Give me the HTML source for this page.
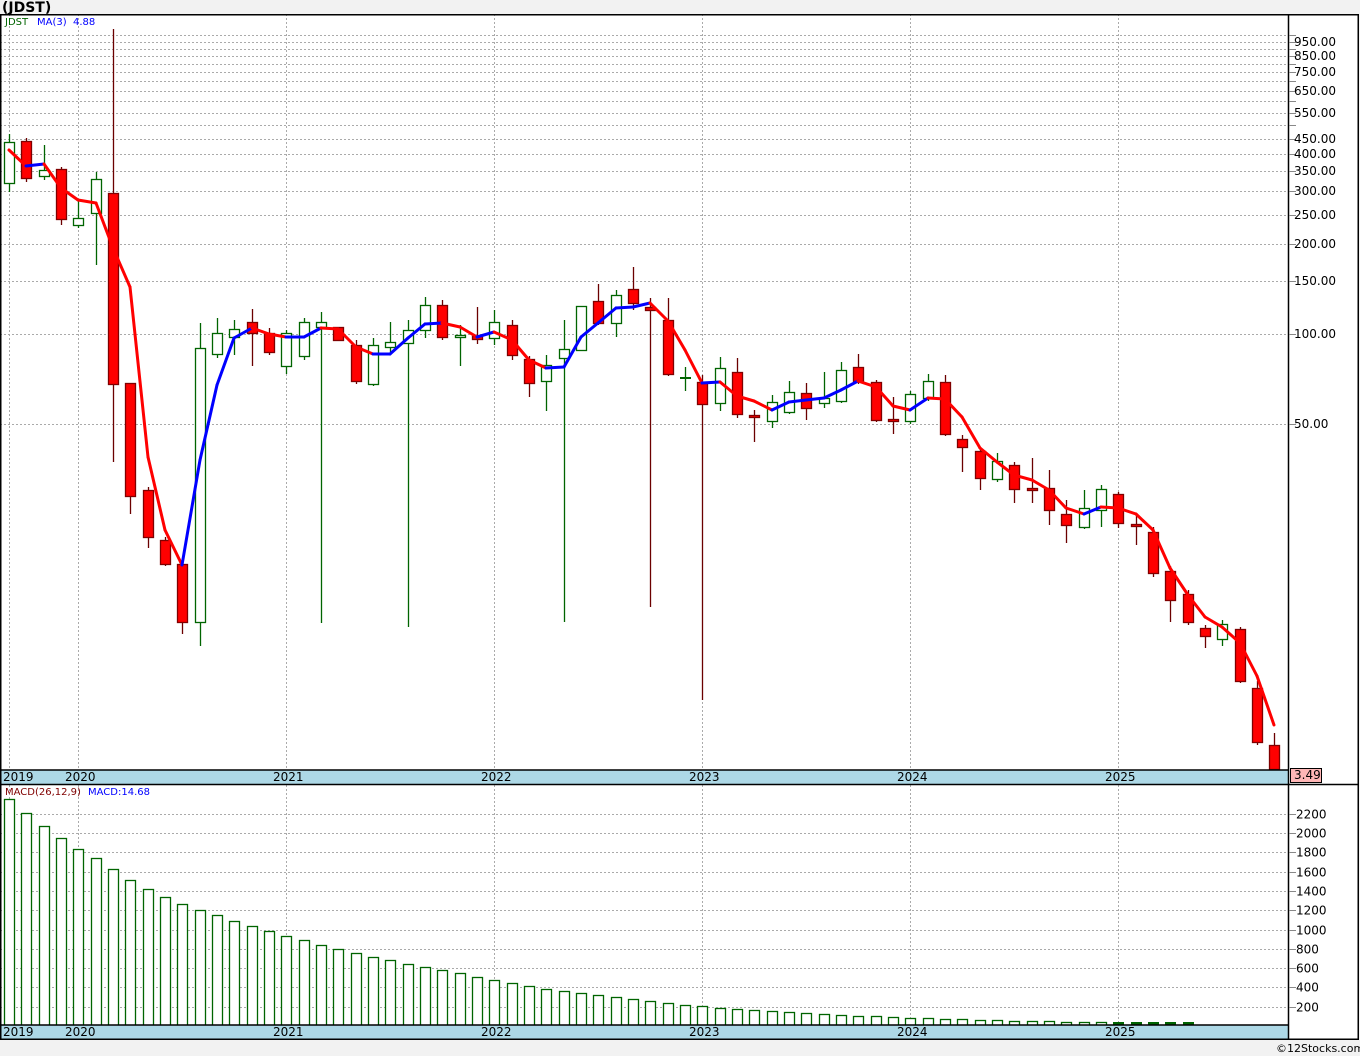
<!DOCTYPE html>
<html><head><meta charset="utf-8"><style>
body{margin:0;background:#f2f2f2;width:1360px;height:1056px;overflow:hidden;font-family:"Liberation Sans",sans-serif}
svg{position:absolute;left:0;top:0}
text{font-family:"DejaVu Sans","Liberation Sans",sans-serif;font-size:11px}
</style></head><body>
<svg id="s" width="1360" height="1056" xmlns="http://www.w3.org/2000/svg">
<rect x="0" y="14" width="1358" height="1026" fill="#fff"/>
<g id="grid"></g>
<g id="macd"></g>
<g id="candles"></g>
<g id="ma"></g>
<rect x="0" y="770" width="1289" height="14" fill="#add8e6"/>
<rect x="0" y="1025" width="1289" height="14" fill="#add8e6"/>
<g fill="none" stroke="#000" stroke-width="1.5">
<rect x="0.75" y="14.75" width="1357.5" height="1024.5"/>
<line x1="1288.5" y1="14" x2="1288.5" y2="1040"/>
<line x1="0" y1="770" x2="1289" y2="770"/>
<line x1="0" y1="784.5" x2="1358" y2="784.5"/>
<line x1="0" y1="1025" x2="1289" y2="1025"/>
</g>
<g fill="#000" style="font-size:12px">
<text x="3" y="781" style="font-size:12px">2019</text><text x="65" y="781" style="font-size:12px">2020</text><text x="273" y="781" style="font-size:12px">2021</text><text x="481" y="781" style="font-size:12px">2022</text><text x="689" y="781" style="font-size:12px">2023</text><text x="897" y="781" style="font-size:12px">2024</text><text x="1105" y="781" style="font-size:12px">2025</text>
<text x="3" y="1036" style="font-size:12px">2019</text><text x="65" y="1036" style="font-size:12px">2020</text><text x="273" y="1036" style="font-size:12px">2021</text><text x="481" y="1036" style="font-size:12px">2022</text><text x="689" y="1036" style="font-size:12px">2023</text><text x="897" y="1036" style="font-size:12px">2024</text><text x="1105" y="1036" style="font-size:12px">2025</text>
</g>
<text x="2" y="12" style="font-size:14px;font-weight:bold">(JDST)</text>
<text x="5" y="25" fill="#006400" style="font-size:10px">JDST</text>
<text x="37" y="25" fill="#0000ff" style="font-size:10px">MA(3)</text>
<text x="73" y="25" fill="#0000ff" style="font-size:10px">4.88</text>
<text x="5" y="795" fill="#800000" style="font-size:10px">MACD(26,12,9)</text>
<text x="88" y="795" fill="#0000ff" style="font-size:10px">MACD:14.68</text>
<rect x="1290.5" y="768.5" width="31" height="14" fill="#ffb6b6" stroke="#000"/>
<text x="1294" y="779" fill="#000" style="font-size:12px">3.49</text>
<g id="ax" fill="#000"></g>
<text x="1276" y="1052" fill="#000" style="font-size:11px">©12Stocks.com</text>
</svg>
<script>
var NS="http://www.w3.org/2000/svg";
function el(p,t,a){var e=document.createElementNS(NS,t);for(var k in a)e.setAttribute(k,a[k]);document.getElementById(p).appendChild(e);return e;}
function Y(p){return 334-299*Math.log10(p/100);}
var g=[];for(var p=1000;p>=100;p-=50)g.push(p);g.push(50);
g.forEach(function(p){var y=Math.round(Y(p))+.5;el("grid","line",{x1:0,y1:y,x2:1289,y2:y,stroke:"#aaa","stroke-dasharray":"2,2"});el("ax","line",{x1:1289,y1:y,x2:1296,y2:y,stroke:"#888"});});
[950,850,750,650,550,450,400,350,300,250,200,150,100,50].forEach(function(p){var t=el("ax","text",{x:1294,y:Math.round(Y(p))+4,style:"font-size:12px"});t.textContent=p.toFixed(2);});
for(var v=200;v<=2200;v+=200){var y=Math.round(1026-v*0.0965)+.5;el("grid","line",{x1:0,y1:y,x2:1289,y2:y,stroke:"#aaa","stroke-dasharray":"2,2"});el("ax","line",{x1:1289,y1:y,x2:1296,y2:y,stroke:"#888"});var t=el("ax","text",{x:1296,y:y+4,style:"font-size:12px"});t.textContent=v;}
[9,78,286,494,702,910,1118].forEach(function(x){el("grid","line",{x1:x+.5,y1:14,x2:x+.5,y2:770,stroke:"#aaa","stroke-dasharray":"2,2"});el("grid","line",{x1:x+.5,y1:785,x2:x+.5,y2:1025,stroke:"#aaa","stroke-dasharray":"2,2"});});
var C=[[142,183,134,192,0],[141,178,138,182,1],[170,176,145,180,0],[169,219,167,225,1],[218,225,200,228,0],[179,213,172,265,0],[193,384,29,462,1],[383,496,383,514,1],[490,537,487,548,1],[540,564,537,566,1],[564,622,562,634,1],[348,622,323,646,0],[333,354,318,358,0],[329,337,320,355,0],[322,333,309,366,1],[333,352,328,355,1],[333,366,330,374,0],[322,356,318,360,0],[322,327,312,623,0],[327,340,327,340,1],[345,381,340,384,1],[345,384,338,386,0],[342,347,322,352,0],[330,343,320,627,0],[305,330,297,338,0],[305,337,300,340,1],[335,337,325,366,0],[336,339,307,344,1],[322,338,310,345,0],[325,355,320,360,1],[359,383,356,397,1],[365,381,355,411,0],[349,358,320,622,0],[306,350,306,350,0],[301,323,284,325,1],[295,323,290,337,0],[289,303,267,310,1],[307,310,298,607,1],[320,374,298,376,1],[377,379,367,391,2],[382,404,375,700,1],[368,403,357,411,0],[372,414,358,418,1],[415,417,410,442,1],[402,421,395,428,0],[392,412,381,414,0],[393,408,383,420,1],[398,403,372,408,0],[370,401,362,403,0],[367,381,354,384,1],[382,420,380,422,1],[419,421,397,434,1],[394,421,391,424,0],[381,398,374,401,0],[382,434,375,436,1],[439,447,435,472,1],[451,478,448,490,1],[461,479,453,482,0],[465,489,462,503,1],[488,490,458,503,1],[488,510,470,525,1],[514,525,500,543,1],[508,527,490,529,0],[489,510,485,527,0],[494,523,492,528,1],[524,526,513,545,1],[532,573,527,577,1],[571,600,566,622,1],[594,622,590,625,1],[628,636,625,648,1],[624,639,620,646,0],[629,681,627,683,1],[688,742,681,745,1],[745,769,733,770,1]];
function X(i){return Math.round(9+i*17.333);}
C.forEach(function(c,i){var x=X(i),red=c[4]==1,col=red?"#6b0000":"#006400";
el("candles","line",{x1:x+.5,y1:c[2],x2:x+.5,y2:c[3],stroke:col,"stroke-width":1.3});
if(c[4]==2){el("candles","rect",{x:x-5,y:c[0],width:11,height:2,fill:"#006400"});return;}
el("candles","rect",{x:x-4.5,y:c[0]+.5,width:10,height:Math.max(1,c[1]-c[0]),fill:red?"#ff0000":"#fff",stroke:red?"#800000":"#006400","stroke-width":1.3});});
var M=[150,166,164,188,200,203,248,287,457,530,565,460,385,338,328,334,337,337,328,329,347,354,354,338,324,323,327,337,332,340,360,368,367,337,323,308,307,303,321,350,383,382,396,401,410,402,400,398,390,381,387,406,410,398,399,417,448,462,475,480,490,508,514,507,508,514,530,568,595,617,627,643,676,725];
for(var i=0;i<M.length-1;i++){el("ma","line",{x1:X(i),y1:M[i],x2:X(i+1),y2:M[i+1],stroke:M[i+1]>M[i]?"#ff0000":"#0000ff","stroke-width":3,"stroke-linecap":"round"});}
var B=[799,813,826,838,849,858,869,880,889,897,904,910,915,921,926,931,936,940,945,949,953,957,960,964,967,970,973,977,980,983,986,989,991,993,995,997,999,1001,1003,1005,1006,1008,1009,1010,1011,1012,1013,1014,1015,1016,1016,1017,1018,1018,1019,1019,1020,1020,1021,1021,1021,1022,1022,1022,1022,1022,1023,1023,1023];
B.forEach(function(y,i){var x=X(i);if(i>=64){el("macd","rect",{x:x-5,y:1022,width:11,height:3,fill:"#006400"});}else el("macd","rect",{x:x-4.5,y:y+.5,width:10,height:1025-y,fill:"#fff",stroke:"#006400","stroke-width":1.3});});
</script>
</body></html>
